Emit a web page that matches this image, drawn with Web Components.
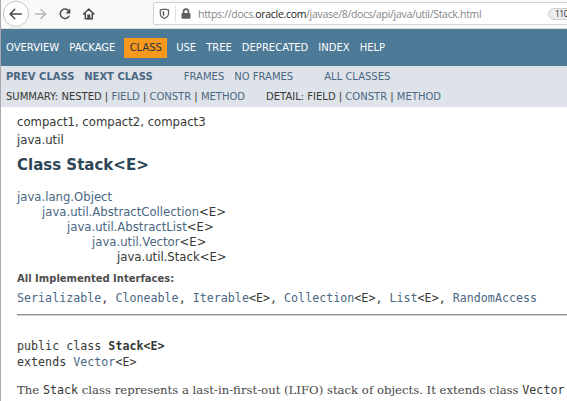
<!DOCTYPE html>
<html lang="en">
<head>
<meta charset="utf-8">
<title>Stack (Java Platform SE 8)</title>
<style>
html,body{margin:0;height:401px;overflow:hidden;background:#fff}
body{font-family:"DejaVu Sans",sans-serif;color:#353833}
</style>
</head>
<body>
<doc-window>
<browser-bar slot="bar"></browser-bar>
<top-nav></top-nav>
<sub-nav></sub-nav>
<class-doc></class-doc>
</doc-window>
<script>
function define(name, html) {
  const t = document.createElement('template');
  t.innerHTML = html;
  customElements.define(name, class extends HTMLElement {
    constructor() {
      super();
      this.attachShadow({mode: 'open'}).append(t.content.cloneNode(true));
    }
  });
}

define('doc-window', `<style>
:host{display:flex;flex-direction:column;box-sizing:border-box;width:567px;height:401px;overflow:hidden;border-left:1px solid #a9a9ab}
</style><slot name="bar"></slot><slot></slot>`);

define('browser-bar', `<style>
:host{display:flex;flex:none;height:29px;box-sizing:border-box;background:#f9f9fa;border-bottom:1px solid #dcdcdd;align-items:flex-start;overflow:hidden}
svg{display:block;flex:none}
.url{display:flex;align-items:center;box-sizing:border-box;width:430px;flex:none;height:23px;margin:2px 0 0 4px;border:1px solid #d2d2d4;border-radius:2px;background:#fff;font:10.5px "Open Sans",sans-serif;color:#858588;white-space:pre}
b{font-weight:400;color:#1c1c1e}
.text{margin-left:6px;width:350px;flex:none;letter-spacing:-.31px}
.zoom{box-sizing:border-box;flex:none;height:12px;width:34px;border:1px solid #d0d0d2;border-radius:6px;background:#ededf0;color:#2a2a2e;font:8.5px/10px "Open Sans",sans-serif;letter-spacing:-.5px;padding-left:6px}
</style>
<svg width="148" height="28" viewBox="1 0 148 28" fill="none" stroke="#4b4b4e" stroke-width="1.5" stroke-linecap="round" stroke-linejoin="round">
<circle cx="16" cy="13.8" r="12.6" fill="#fff" stroke="#c6c6c8" stroke-width="1"/>
<path d="M21.3 14H10.2M14.8 9.3 10.1 14l4.7 4.7"/>
<path stroke="#b5b5b7" d="M35.5 14h10M41 9.5l4.6 4.5-4.6 4.5"/>
<path d="M68.6 10.8A4.7 4.7 0 1 0 69 16.2"/>
<path d="M70.3 8.6v4.8h-4.8z" fill="#4b4b4e" stroke="none"/>
<path d="M83.7 14 88.8 9l5.1 5M85.3 13.6v5.2h7v-5.2"/>
<path d="M87.5 18.8v-4h2.6v4z" fill="#4b4b4e" stroke-width=".5"/>
</svg>
<div class="url">
<svg width="38" height="21" viewBox="154 3 38 21" fill="none" stroke="#5e5e61">
<path d="M164.4 9.2c1.6 0 2.8.5 4.1.7v3.6c0 2.2-1.6 4-4.1 5-2.5-1-4.1-2.8-4.1-5V9.9c1.3-.2 2.5-.7 4.1-.7z" stroke-width="1.2"/>
<path d="M164.3 11.3v5c-1-.6-1.7-1.5-1.7-2.8v-2z" fill="#5e5e61" stroke="none"/>
<path d="M175.5 5.5v16" stroke="#e1e1e3"/>
<path d="M183.6 13v-1.5a2.4 2.4 0 0 1 4.8 0V13" stroke-width="1.6"/>
<rect x="181.5" y="12.9" width="9" height="5.8" rx="1" fill="#5e5e61" stroke="none"/>
</svg><span class="text">https://docs.<b>oracle.com</b>/javase/8/docs/api/java/util/Stack.html</span><span class="zoom">110</span>
</div>`);

define('top-nav', `<style>
:host{display:flex;align-items:flex-start;flex:none;height:37px;box-sizing:border-box;background:#4d7a97;color:#fff;font-size:10px;padding:9px 0 0 5px;gap:10px;white-space:nowrap}
span{line-height:20px}
.on{background:#f8981d;color:#253441;padding:0 5.5px;width:32px;margin:0 -1px 0 -1.3px}
</style><span>OVERVIEW</span><span>PACKAGE</span><span class="on">CLASS</span><span>USE</span><span>TREE</span><span>DEPRECATED</span><span>INDEX</span><span>HELP</span>`);

define('sub-nav', `<style>
:host{display:flex;flex-direction:column;flex:none;box-sizing:border-box;height:41px;padding:1px 5px 0;background:#dee3e9;font-size:10px;white-space:pre}
div{display:flex;line-height:20px}
a,b{color:#4a6782}
b{margin-right:9.7px}
</style><div><b>PREV CLASS</b><b style="margin-right:31px">NEXT CLASS</b><a style="margin-right:10px">FRAMES</a><a style="margin-right:31px">NO FRAMES</a><a>ALL CLASSES</a></div>
<div><span style="margin-right:21px">SUMMARY: NESTED | <a>FIELD</a> | <a>CONSTR</a> | <a>METHOD</a></span><span>DETAIL: FIELD | <a>CONSTR</a> | <a>METHOD</a></span></div>`);

define('class-doc', `<style>
:host{display:block;flex:1;padding:6px 0 0 16px;font-size:11.68px;white-space:nowrap}
div,h2,h4,pre,p,ul{margin:0;padding:0}
a{color:#4a6782}
.p{line-height:18px}
h2{font-size:15px;line-height:30px;padding-top:1px;color:#2c4557}
ul{list-style:none;padding-top:10px;line-height:15px}
li:nth-child(2){padding-left:25px}li:nth-child(3){padding-left:50px}li:nth-child(4){padding-left:75px}li:nth-child(5){padding-left:100px}
h4{font-size:10px;line-height:15px;padding-top:6px;color:#4e4e4e}
code,pre{font-family:"DejaVu Sans Mono",monospace;font-size:11.68px}
.i{line-height:16px;padding-top:4px}
.i code{display:block}
hr{margin:8px 0 0;border:0;border-top:1px solid #939393;border-bottom:1px solid #d0d0d0;height:0}
pre{line-height:16px;padding-top:22px}
p{font:11.68px/18px "DejaVu Serif",serif;color:#474747;padding-top:11px}
p code{color:#353833}
</style>
<div class="p">compact1, compact2, compact3</div><div class="p">java.util</div>
<h2>Class Stack&lt;E&gt;</h2>
<ul><li><a>java.lang.Object</a></li><li><a>java.util.AbstractCollection</a>&lt;E&gt;</li><li><a>java.util.AbstractList</a>&lt;E&gt;</li><li><a>java.util.Vector</a>&lt;E&gt;</li><li>java.util.Stack&lt;E&gt;</li></ul>
<h4>All Implemented Interfaces:</h4>
<div class="i"><code><a>Serializable</a>, <a>Cloneable</a>, <a>Iterable</a>&lt;E&gt;, <a>Collection</a>&lt;E&gt;, <a>List</a>&lt;E&gt;, <a>RandomAccess</a></code></div>
<hr>
<pre>public class <b>Stack&lt;E&gt;</b>
extends <a>Vector</a>&lt;E&gt;</pre>
<p>The <code>Stack</code> class represents a last-in-first-out (LIFO) stack of objects. It extends class <code>Vector</code></p>`);
</script>
</body>
</html>
